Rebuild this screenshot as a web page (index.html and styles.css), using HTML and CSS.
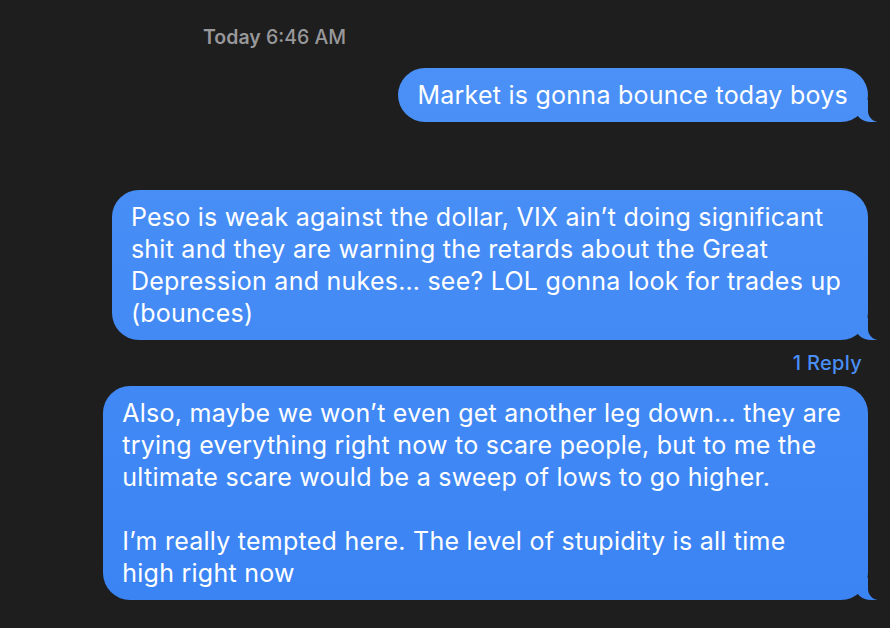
FILE: index.html
```html
<!DOCTYPE html>
<html>
<head>
  <title>Messages</title>
  <link rel="stylesheet" href="styles.css">
</head>
<body>
  <div class="thread">
    <div class="stamp"><b>Today</b> 6:46 AM</div>

    <div class="row row-first">
      <div class="bubble">Market is gonna bounce today boys</div>
    </div>

    <div class="row row-second">
      <div class="bubble bubble-wrap">Peso is weak against the dollar, VIX ain’t doing significant<br>shit and they are warning the retards about the Great<br>Depression and nukes… see? LOL gonna look for trades up<br>(bounces)</div>
    </div>
    <div class="reply">1 Reply</div>

    <div class="row">
      <div class="bubble bubble-wrap">Also, maybe we won’t even get another leg down… they are<br>trying everything right now to scare people, but to me the<br>ultimate scare would be a sweep of lows to go higher.<br><br>I’m really tempted here. The level of stupidity is all time<br>high right now</div>
    </div>
  </div>
</body>
</html>
```

FILE: styles.css
```css
body {
  margin: 0;
  background-color: #1e1e1e;
  font-family: Inter, "Noto Sans", sans-serif;
}

.thread {
  display: flex;
  flex-direction: column;
  padding: 25px 22px 0 0;
}

.stamp {
  padding-left: 203px;
  color: #98989b;
  font-size: 19.5px;
  font-weight: 500;
  line-height: 24px;
}

.stamp b {
  font-weight: 600;
}

.row {
  display: flex;
  justify-content: flex-end;
}

.row-first {
  margin-top: 19px;
}

.row-second {
  margin-top: 68px;
}

.bubble {
  position: relative;
  padding: 11px 20px 11px 19px;
  border-radius: 27px;
  color: #fff;
  font-size: 25px;
  letter-spacing: 0.25px;
  line-height: 32px;
  background: linear-gradient(#4d92f7, #3a83f3) fixed;
}

/* wrapped messages keep some slack on the right */
.bubble-wrap {
  padding-right: 27px;
}

/* tail */
.bubble::before {
  content: "";
  position: absolute;
  bottom: 0;
  right: -9px;
  width: 22px;
  height: 22px;
  background: linear-gradient(#4d92f7, #3a83f3) fixed;
  border-bottom-left-radius: 16px 14px;
}

.bubble::after {
  content: "";
  position: absolute;
  bottom: 0;
  right: -12px;
  width: 12px;
  height: 24px;
  background-color: #1e1e1e;
  border-bottom-left-radius: 11px;
}

.reply {
  align-self: flex-end;
  margin: 11px 6px 11px 0;
  color: #4a8ff5;
  font-size: 20px;
  font-weight: 500;
  letter-spacing: 0.3px;
  line-height: 24px;
}
```
